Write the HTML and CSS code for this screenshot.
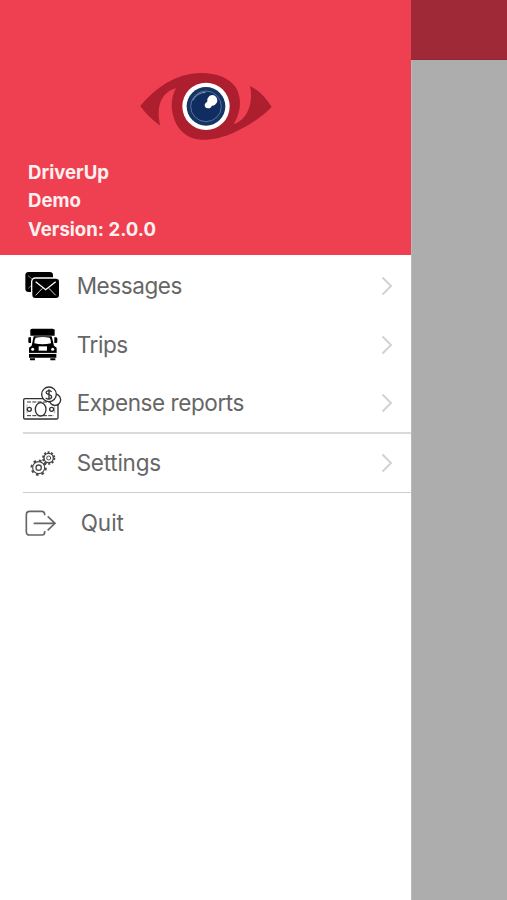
FILE: index.html
```html
<!DOCTYPE html>
<html lang="en">
<head>
<meta charset="utf-8">
<title>DriverUp</title>
<link rel="stylesheet" href="styles.css">
</head>
<body>
<div class="app">
  <aside class="drawer">
    <header class="profile">
      <svg class="logo" viewBox="0 0 450 270">
        <path fill="#ad1f2f" d="M31 138C75 86 134 40 214 39c44 0 85 14 104 44 20 34 13 79-8 110 32-10 63-49 50-115 29 14 48 36 65 63-29 30-76 61-114 77-32 14-69 23-99 21-48-3-77-38-85-82-5-28 0-53 11-72-40 9-63 52-47 112-21-15-43-34-60-59z"/>
        <circle cx="228" cy="139" r="71" fill="#fff"/>
        <circle cx="228" cy="139" r="58" fill="#153463"/>
        <circle cx="228" cy="139" r="46" fill="#102d62" stroke="#5b7195" stroke-width="3"/>
        <path d="M188 122q12-24 39-25" fill="none" stroke="#8296b1" stroke-width="3"/>
        <path d="M239 107q13-5 20 5 8 13-4 22-5 4-10 3-2 9-12 8-9-1-9-10 1-7 8-10-2-10 7-18z" fill="#fff"/>
      </svg>
      <div class="identity">
        <div>DriverUp</div>
        <div>Demo</div>
        <div>Version: 2.0.0</div>
      </div>
    </header>
    <nav class="menu">
      <a class="item">
        <svg class="icon" viewBox="0 0 140 150">
          <rect x="16" y="33" width="83" height="60" rx="10"/>
          <path d="M24 44l12 10M25 82l10-9" stroke="#bbb" stroke-width="2"/>
          <rect x="35" y="51" width="84" height="62" rx="11" stroke="#fff" stroke-width="4"/>
          <g fill="none" stroke="#fff" stroke-width="4"><path d="M47 62l30 24 30-24"/><path d="M47 103l20-21M107 103L87 82" stroke-width="2.5"/></g>
        </svg>
        <span class="label">Messages</span>
        <svg class="chevron" viewBox="0 0 12 20"><path d="M1.5 1.5L10 10l-8.500 8.500"/></svg>
      </a>
      <a class="item">
        <svg class="icon" viewBox="0 -3 140 150">
          <path d="M31 28q0-5 5-5h62q6 0 6 5v16H31z"/>
          <path fill-rule="evenodd" d="M41 46h54l7 28 8 6v16H27V80l8-6zM47 50q-4 5-4 17 25 6 50 0 0-12-4-17-21-4-42 0z"/>
          <path d="M26 49h7v17h-5q-3 0-3-4V52zM103 49h6l3 3v10q0 4-3 4h-6zM27 99h82v11H27zM30 112h15v6H30zM91 112h15v6H91z"/>
          <path d="M56 76h25v13H56z" fill="#fff"/>
          <g fill="#fff"><circle cx="38" cy="85" r="4.500"/><circle cx="98" cy="85" r="4.500"/></g>
          <path d="M27 97h82" stroke="#ddd" stroke-width="2"/>
        </svg>
        <span class="label">Trips</span>
        <svg class="chevron" viewBox="0 0 12 20"><path d="M1.500 1.500L10 10l-8.500 8.500"/></svg>
      </a>
      <a class="item divided expense">
        <svg class="icon" viewBox="2 -12 140 150">
          <g fill="#fff" stroke="#303030" stroke-width="4">
            <rect x="13" y="50" width="103" height="61" rx="4"/>
            <path d="M23 60h81M23 101h81" stroke-dasharray="12 4" stroke-width="3"/>
            <path d="M23 67v27M106 67v27" stroke="#888" stroke-width="2"/>
            <ellipse cx="64" cy="82" rx="16" ry="20"/>
            <circle cx="30" cy="82" r="6"/><circle cx="97" cy="82" r="6"/>
            <circle cx="107" cy="53" r="17"/>
            <circle cx="89" cy="37" r="22"/>
          </g>
          <path d="M97 29q-7-5-13-2-7 5 0 9l9 3q8 6 0 11-7 3-14-2M89 22v31" fill="none" stroke="#303030" stroke-width="4"/>
        </svg>
        <span class="label">Expense reports</span>
        <svg class="chevron" viewBox="0 0 12 20"><path d="M1.500 1.500L10 10l-8.500 8.500"/></svg>
      </a>
      <a class="item divided settings">
        <svg class="icon" viewBox="0 0 140 150">
          <g fill="none" stroke="#484848">
            <circle cx="56" cy="89" r="18" stroke-width="3.500"/>
            <circle cx="56" cy="89" r="21.500" stroke-width="6" stroke-dasharray="8 8.890"/>
            <circle cx="56" cy="89" r="8" stroke-width="4"/>
            <circle cx="86" cy="60" r="14" stroke-width="4"/>
            <circle cx="86" cy="60" r="17" stroke-width="6" stroke-dasharray="6 4.680"/>
            <circle cx="86" cy="60" r="6" stroke-width="3"/>
          </g>
        </svg>
        <span class="label">Settings</span>
        <svg class="chevron" viewBox="0 0 12 20"><path d="M1.500 1.500L10 10l-8.500 8.500"/></svg>
      </a>
      <a class="item quit">
        <svg class="icon" viewBox="0 -3 140 150">
          <path d="M74 49v-3q0-9-9-9H29q-10 0-10 10v51q0 10 10 10h37q8 0 8-8v-4M41 73h62M83 52l22 21-22 21" fill="none" stroke="#666" stroke-width="5"/>
        </svg>
        <span class="label">Quit</span>
      </a>
    </nav>
  </aside>
  <main class="page"><div class="topbar"></div></main>
</div>
</body>
</html>
```
FILE: styles.css
```css
* { box-sizing: border-box; }
body { margin: 0; font-family: Inter, "Liberation Sans", sans-serif; }
.app { display: flex; height: 900px; overflow: hidden; }
.drawer { width: 411px; background: #fff; }
.profile { height: 255px; padding-top: 60px; background: #ef4051; }
.logo { display: block; width: 150px; height: 90px; margin-left: 130px; }
.identity { padding: 8px 28px 0; color: #fff0f0; font-size: 18.6px; font-weight: 700; line-height: 28.3px; }
.menu { padding-top: 1px; }
.item { display: flex; align-items: center; height: 59px; margin-left: 23px; color: #666; }
.divided { border-bottom: 1px solid #cdcdcd; }
.expense { height: 60px; border-bottom: 2px solid #dadada; }
.icon { flex: none; width: 46.67px; height: 50px; margin-left: -3px; }
.label { flex: 1; margin-left: 10px; font-size: 22.5px; line-height: 30px; letter-spacing: -0.42px; }
.divided .label { padding-bottom: 1px; }
.settings .label { letter-spacing: -0.25px; }
.chevron { width: 12px; height: 20px; margin-right: 18px; fill: none; stroke: #d2d2d2; stroke-width: 2; }
.quit { height: 60px; }
.quit .label { margin-left: 14px; letter-spacing: 0; }
.page { flex: 1; background: #adadad; border-left: 1px solid #b8b8b8; }
.topbar { height: 60px; margin-left: -1px; background: #a02937; border-bottom: 1px solid #8f2935; }
```
